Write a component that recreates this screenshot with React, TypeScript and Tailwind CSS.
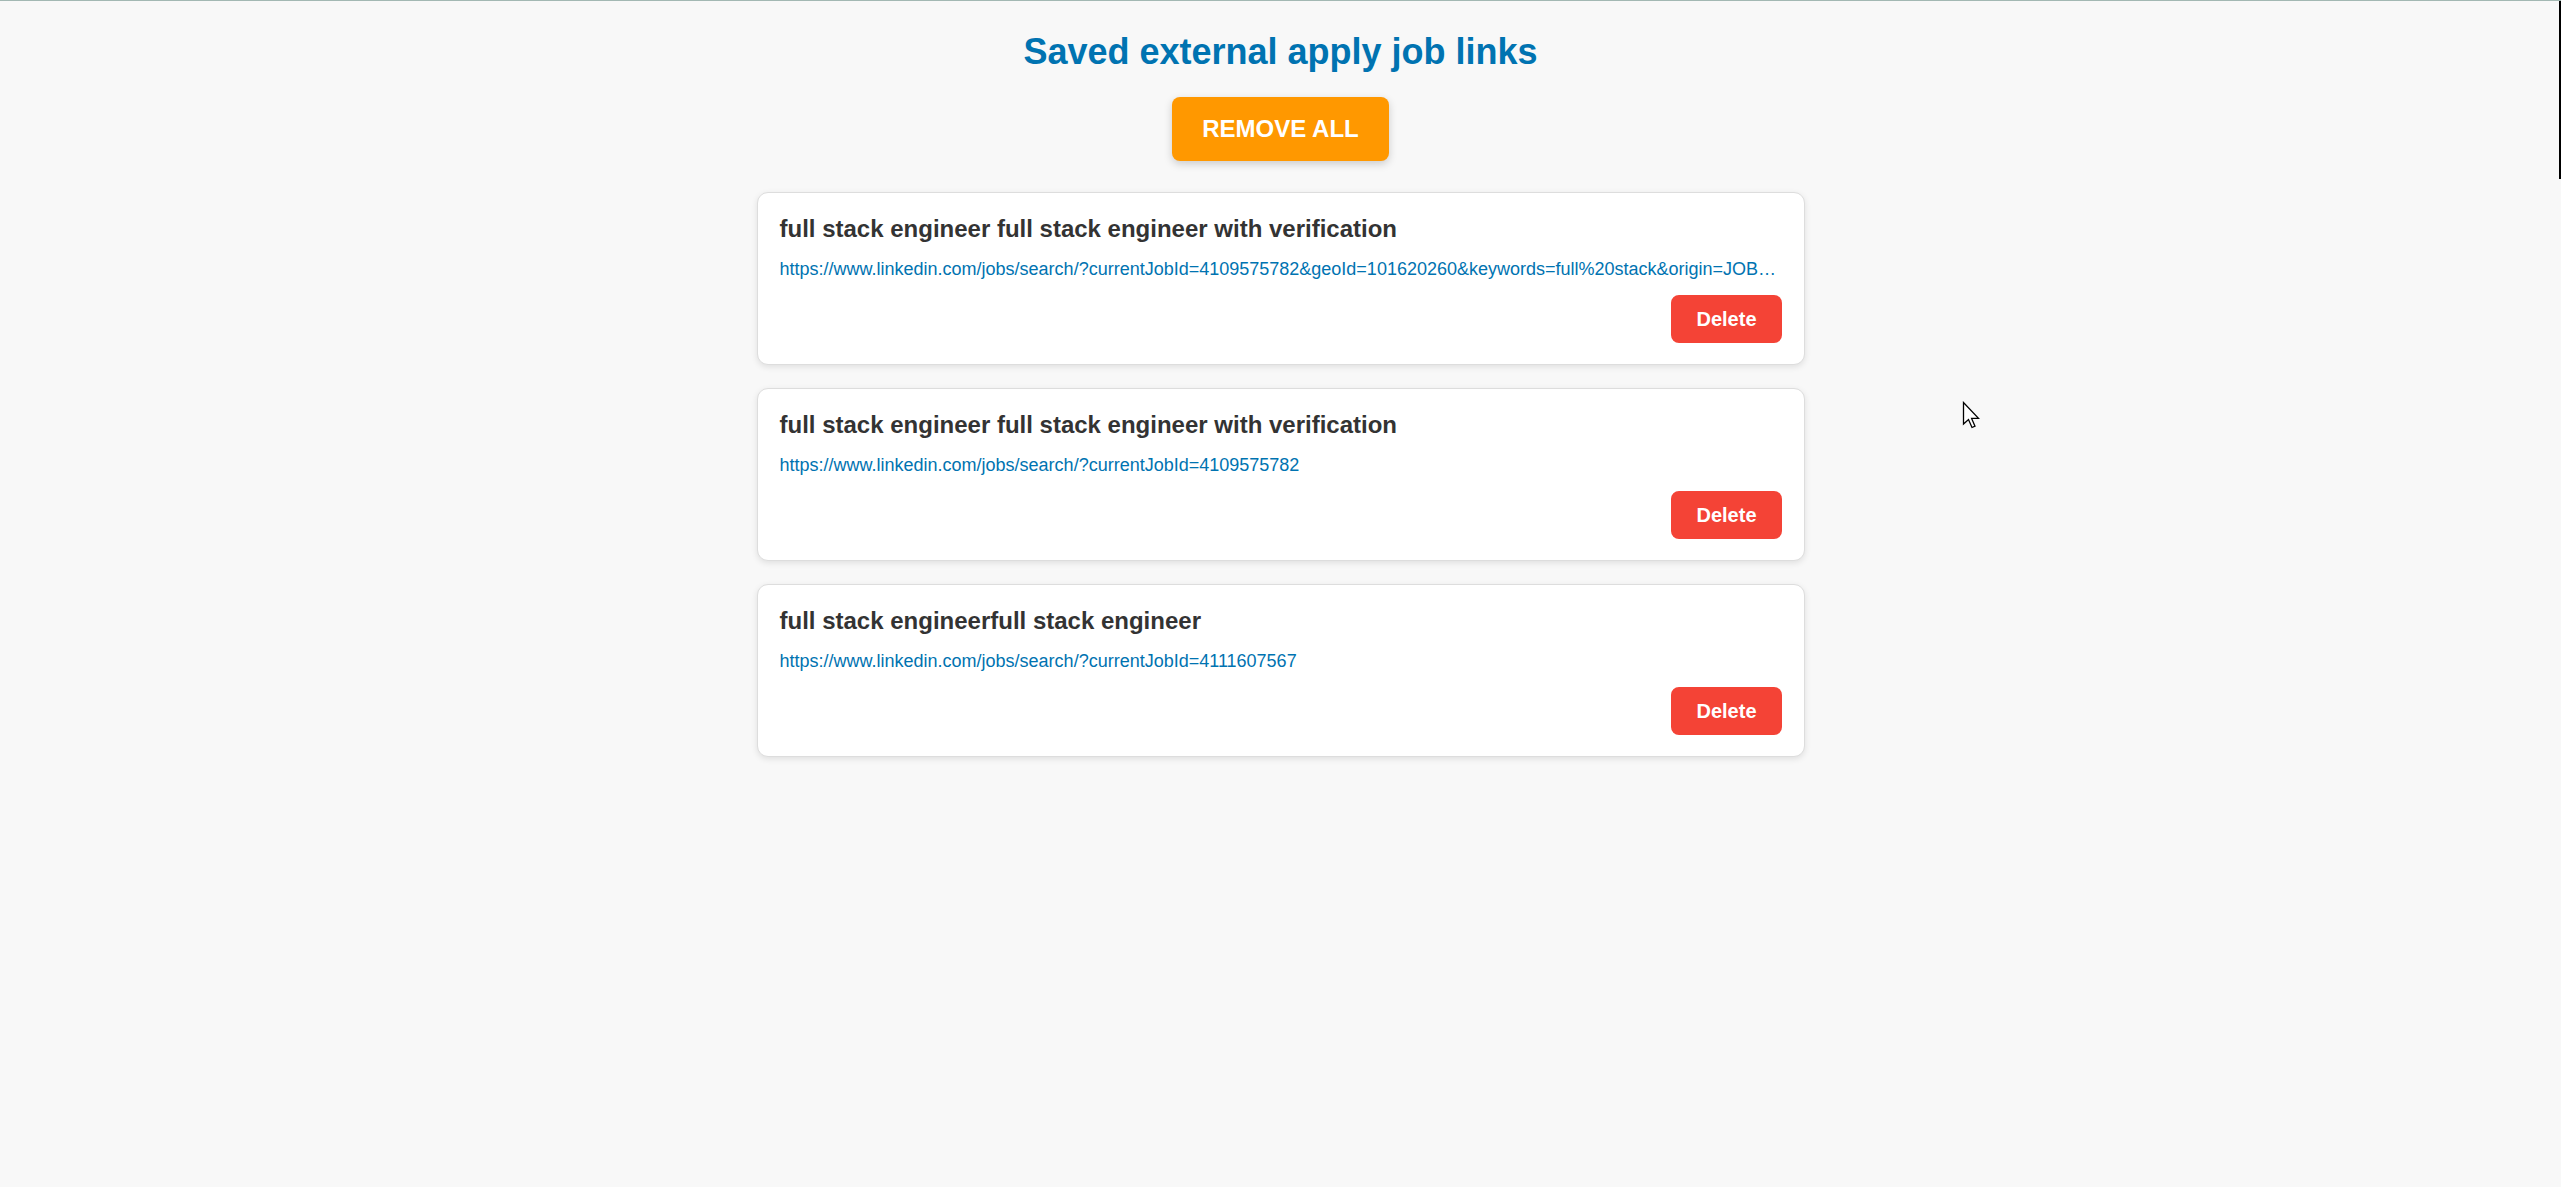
import React from 'react'

type SavedLink = {
  id: number
  title: string
  url: string
}

const savedLinks: SavedLink[] = [
  {
    id: 1,
    title: 'full stack engineer full stack engineer with verification',
    url: 'https://www.linkedin.com/jobs/search/?currentJobId=4109575782&geoId=101620260&keywords=full%20stack&origin=JOBS_HOME_KEYWORD_HISTORY&refresh=true'
  },
  {
    id: 2,
    title: 'full stack engineer full stack engineer with verification',
    url: 'https://www.linkedin.com/jobs/search/?currentJobId=4109575782'
  },
  {
    id: 3,
    title: 'full stack engineerfull stack engineer',
    url: 'https://www.linkedin.com/jobs/search/?currentJobId=4111607567'
  }
]

function Cursor() {
  return (
    <svg
      className="absolute left-[1962px] top-[400px] pointer-events-none"
      width="20"
      height="30"
      viewBox="0 0 20 30"
    >
      <path
        d="M1.5 1.5 L1.5 23 L6.5 18.5 L10 26.5 L13 25.2 L9.6 17.4 L16.5 17.4 Z"
        fill="#ffffff"
        stroke="#000000"
        strokeWidth="1.3"
        strokeLinejoin="miter"
      />
    </svg>
  )
}

export default function App() {
  const links = savedLinks

  return (
    <div
      className="relative min-h-[1187px] w-full bg-[#f8f8f8] border-t border-[#a3b8b3]"
      style={{ fontFamily: '"Liberation Sans", Arial, sans-serif' }}
    >
      {/* window edge artifact */}
      <div className="absolute right-0 top-0 h-[178px] w-[2px] bg-black" />

      <div className="flex flex-col items-center pt-[30px]">
        {/* Header */}
        <h1 className="text-[36px] leading-[41px] font-bold text-[#0073b1] mb-[25px]">
          Saved external apply job links
        </h1>

        <button className="h-[64px] px-[30px] rounded-[8px] bg-[#ff9800] text-white text-[24px] font-bold shadow-[0_3px_8px_rgba(0,0,0,0.18)] mb-[31px]">
          REMOVE ALL
        </button>

        {/* Saved links */}
        <div className="w-[1048px] flex flex-col gap-[23px]">
          {links.map((link) => (
            <div
              key={link.id}
              className="h-[173px] bg-white border border-[#dddddd] rounded-[11px] shadow-[0_2px_6px_rgba(0,0,0,0.1)] px-[22px] pt-[22px] pb-[21px] flex flex-col"
            >
              <h3 className="text-[24px] leading-[28px] font-bold text-[#333333] mb-[16px]">
                {link.title}
              </h3>
              <a
                href={link.url}
                className="block text-[18px] leading-[21px] text-[#0073b1] whitespace-nowrap overflow-hidden text-ellipsis"
              >
                {link.url}
              </a>
              <div className="flex justify-end mt-auto">
                <button className="h-[48px] px-[25px] rounded-[8px] bg-[#f44336] text-white text-[20px] font-bold">
                  Delete
                </button>
              </div>
            </div>
          ))}
        </div>
      </div>

      <Cursor />
    </div>
  )
}
